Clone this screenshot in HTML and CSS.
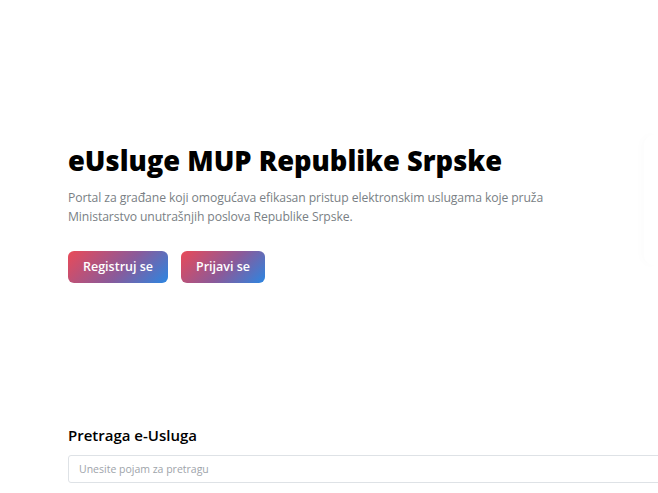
FILE: index.html
```html
<!DOCTYPE html>
<html lang="sr">
<head>
    <meta charset="UTF-8">
    <meta name="viewport" content="width=device-width, initial-scale=1.0">
    <title>eUsluge MUP Republike Srpske</title>
    <link rel="stylesheet" href="styles.css">
</head>
<body>

    <section class="hero">
        <div class="hero-text">
            <h1>eUsluge MUP Republike Srpske</h1>
            <p>Portal za građane koji omogućava efikasan pristup elektronskim uslugama koje pruža Ministarstvo unutrašnjih poslova Republike Srpske.</p>
            <div class="hero-buttons">
                <a href="#" class="btn-gradient">Registruj se</a>
                <a href="#" class="btn-gradient">Prijavi se</a>
            </div>
        </div>
        <div class="hero-card"></div>
    </section>

    <section class="search">
        <h2>Pretraga e-Usluga</h2>
        <input type="text" class="search-input" placeholder="Unesite pojam za pretragu">
    </section>

</body>
</html>
```

FILE: styles.css
```css
body {
    margin: 0;
    font-family: "Open Sans", "Noto Sans", sans-serif;
    background-color: #fff;
    color: #000;
    overflow: hidden;
}
.hero {
    display: flex;
    justify-content: space-between;
    padding: 140px 0 0 68px;
    height: 284px;
}
.hero-text {
    width: 500px;
}
h1 {
    margin: 0;
    font-size: 27.3px;
    font-weight: 800;
    line-height: 42px;
    letter-spacing: 0;
    white-space: nowrap;
}
.hero-text p {
    margin: 6px 0 0;
    width: 500px;
    font-size: 12.2px;
    letter-spacing: -0.1px;
    line-height: 19px;
    color: #7a7f85;
}
.hero-buttons {
    display: flex;
    gap: 13px;
    margin-top: 25px;
}
.btn-gradient {
    display: inline-block;
    padding: 0 15px;
    height: 32px;
    line-height: 32px;
    border-radius: 6px;
    background: linear-gradient(135deg, #ea4a58, #8a5a9a 55%, #2b86e2);
    color: #fff;
    font-size: 12.5px;
    font-weight: 600;
    text-decoration: none;
}
.hero-card {
    width: 14px;
    height: 130px;
    margin-top: -5px;
    box-shadow: -3px 0 8px rgba(0, 0, 0, 0.015);
    border-radius: 10px 0 0 10px;
}
.search {
    padding: 0 0 0 68px;
}
.search h2 {
    margin: 0 0 9px;
    font-size: 15px;
    font-weight: 600;
    line-height: 22px;
}
.search-input {
    display: block;
    box-sizing: border-box;
    width: 620px;
    height: 28px;
    padding: 0 10px;
    border: 1px solid #dee2e6;
    border-radius: 3px;
    font-family: inherit;
    font-size: 10.5px;
}
.search-input::placeholder {
    color: #9ea4aa;
}
```
